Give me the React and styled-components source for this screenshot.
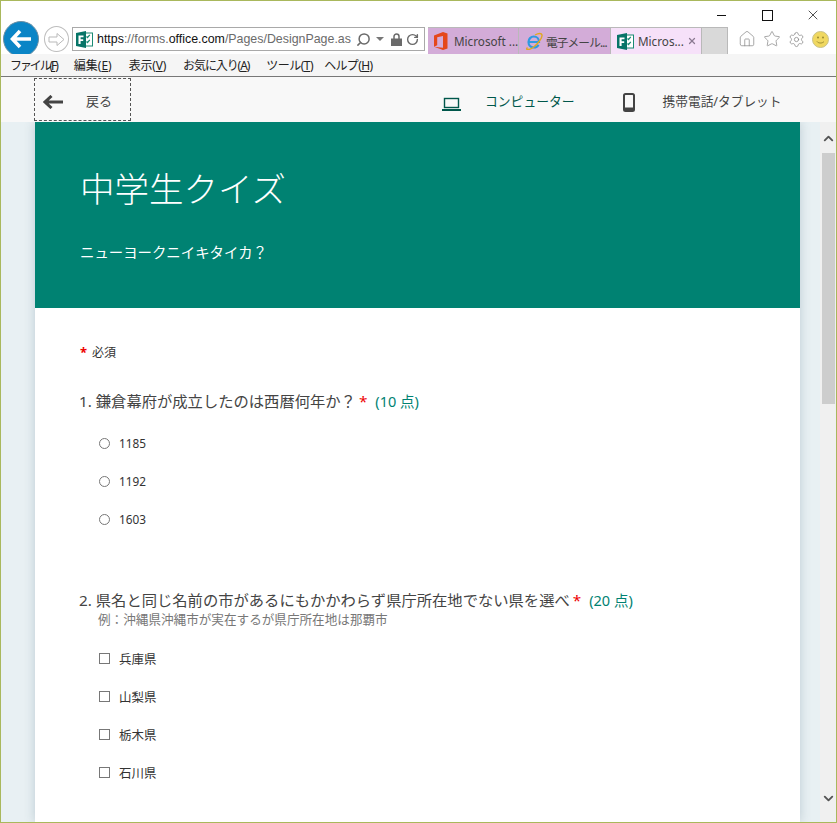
import React from "react";
import styled, { createGlobalStyle } from "styled-components";
import { Home, Star, Settings, Search, RotateCw, X, ChevronUp, ChevronDown } from "lucide-react";

const GlobalStyle = createGlobalStyle`
  html, body { margin: 0; padding: 0; background: #fff; }
  body { font-family: "Noto Sans", "Noto Sans CJK JP", sans-serif; }
  * { box-sizing: border-box; }
`;

const Window = styled.div`
  width: 837px;
  height: 823px;
  border: 1px solid #a9b85c;
  display: flex;
  flex-direction: column;
  overflow: hidden;
  background: #fff;
`;

// browser chrome
const Chrome = styled.div`
  height: 53px;
  overflow: hidden;
  flex-shrink: 0;
`;
const CaptionRow = styled.div`
  height: 26px;
  display: flex;
  justify-content: flex-end;
  align-items: flex-start;
  color: #111;
`;
const CaptionBtn = styled.div`
  width: 46px;
  height: 26px;
  display: flex;
  align-items: center;
  justify-content: center;
  padding-top: 2px;
`;
const MinLine = styled.span`
  width: 9px;
  height: 1px;
  background: #111;
`;
const MaxBox = styled.span`
  width: 11px;
  height: 11px;
  border: 1px solid #111;
`;
const NavRow = styled.div`
  height: 27px;
  display: flex;
  align-items: flex-start;
`;
const BackCircle = styled.div`
  width: 36px;
  height: 36px;
  border-radius: 50%;
  background: #0a85c6;
  border: 1px solid #6d8fa3;
  margin: -6px 0 0 2px;
  display: flex;
  align-items: center;
  justify-content: center;
  flex-shrink: 0;
`;
const ForwardCircle = styled.div`
  width: 25px;
  height: 26px;
  border-radius: 50%;
  border: 1px solid #bdbdbd;
  margin: -1px 0 0 5px;
  display: flex;
  align-items: center;
  justify-content: center;
  flex-shrink: 0;
`;
const AddressBar = styled.div`
  width: 353px;
  height: 24px;
  margin-left: 3px;
  border: 1px solid #a9a9a9;
  display: flex;
  align-items: center;
  padding: 0 5px 0 3px;
  flex-shrink: 0;
`;
const Url = styled.div`
  width: 256px;
  margin-left: 4px;
  overflow: hidden;
  white-space: nowrap;
  font-family: "Liberation Sans", sans-serif;
  font-size: 12.4px;
  color: #6b6b6b;
  b { font-weight: 400; color: #111; }
`;
const AddressTools = styled.div`
  display: flex;
  align-items: center;
  margin-left: 5px;
  color: #6a6a6a;
`;
const Caret = styled.span`
  width: 0;
  height: 0;
  border-left: 4px solid transparent;
  border-right: 4px solid transparent;
  border-top: 4px solid #777;
  margin: 0 7px 0 5px;
`;
const Tabs = styled.div`
  display: flex;
  margin-left: 3px;
  height: 27px;
  flex-shrink: 0;
`;
const Tab = styled.div`
  width: ${(p) => p.$w}px;
  height: 27px;
  background: ${(p) => (p.$active ? "#f6e1f9" : "#d3acd8")};
  border-top: 1px solid #b9b9b9;
  border-right: 1px solid #b9b9b9;
  display: flex;
  align-items: center;
  padding-left: 6px;
  gap: ${(p) => p.$gap}px;
  font-size: 11.7px;
  letter-spacing: ${(p) => p.$ls || 0}px;
  color: #444;
  white-space: nowrap;
`;
const TabClose = styled.span`
  display: flex;
  margin-left: -1px;
  color: #8b7a92;
`;
const BlankTab = styled.div`
  width: 26px;
  height: 27px;
  background: #d9d9d9;
  border-top: 1px solid #b9b9b9;
  border-right: 1px solid #b9b9b9;
`;
const Tools = styled.div`
  display: flex;
  align-items: center;
  gap: 7px;
  margin: 3px 0 0 10px;
  color: #8a8a8a;
`;

const MenuBar = styled.div`
  height: 23px;
  flex-shrink: 0;
  background: #f5f5f5;
  border-bottom: 1px solid #777;
  display: flex;
  align-items: center;
  padding-left: 9px;
  gap: 17px;
  font-size: 12px;
  color: #222;
`;
const MenuItem = styled.div`
  letter-spacing: ${(p) => p.$ls}px;
  margin-right: ${(p) => p.$mr || 0}px;
  white-space: nowrap;
  u { text-underline-offset: 1px; }
`;

// forms preview toolbar
const PreviewBar = styled.div`
  height: 45px;
  flex-shrink: 0;
  background: #f8f8f8;
  display: flex;
  align-items: flex-start;
`;
const BackLink = styled.div`
  width: 97px;
  height: 43px;
  margin: 1px 0 0 33px;
  border: 1px dashed #555;
  display: flex;
  align-items: center;
  padding-left: 8px;
  font-size: 13px;
  color: #444;
  svg { margin-top: 5px; }
  span { margin: 2px 0 0 23px; }
`;
const Device = styled.div`
  height: 45px;
  display: flex;
  align-items: center;
  margin-left: ${(p) => p.$ml}px;
  font-size: ${(p) => p.$size}px;
  color: ${(p) => p.$color};
  svg { margin-top: ${(p) => p.$iconTop}px; }
  span { margin: 2px 0 0 ${(p) => p.$gap}px; white-space: nowrap; }
`;

// page
const Main = styled.div`
  flex: 1;
  min-height: 0;
  display: flex;
`;
const Canvas = styled.div`
  flex: 1;
  min-width: 0;
  padding: 0 20px 0 34px;
  background: #e8f0f3;
  overflow: hidden;
`;
const Card = styled.div`
  background: #fff;
  height: 100%;
  box-shadow: 0 0 10px rgba(60, 90, 110, 0.25);
`;
const Banner = styled.div`
  height: 186px;
  background: #008272;
  color: #fff;
  padding: 44px 45px 0;
`;
const Title = styled.div`
  font-size: 34.500px;
  font-weight: 300;
  line-height: 45px;
`;
const Subtitle = styled.div`
  font-size: 14.400px;
  line-height: 20px;
  margin-top: 32px;
`;
const Body = styled.div`
  padding: 35px 45px 0;
`;
const Required = styled.div`
  font-size: 12px;
  line-height: 18px;
  color: #333;
  i { font-style: normal; font-weight: 700; color: #e00; margin-right: 5px; font-size: 13px; }
`;
const Question = styled.div`
  margin-top: ${(p) => p.$mt}px;
  margin-left: -1px;
  font-size: 15.300px;
  line-height: 20px;
  color: #444;
  white-space: nowrap;
`;
const Star2 = styled.span`
  color: #e00;
  margin: 0 ${(p) => p.$r}px 0 ${(p) => p.$l}px;
`;
const Points = styled.span`
  font-size: 14.500px;
  color: #008272;
`;
const Hint = styled.div`
  margin-left: 18px;
  font-size: 12.600px;
  line-height: 20px;
  color: #777;
  white-space: nowrap;
`;
const Options = styled.div`
  display: flex;
  flex-direction: column;
  gap: 20px;
  margin-top: ${(p) => p.$mt}px;
  padding-left: 19px;
`;
const Option = styled.div`
  height: 18px;
  display: flex;
  align-items: center;
  font-size: ${(p) => (p.$num ? 11.8 : 12.5)}px;
  color: #333;
  gap: 9px;
`;
const Mark = styled.span`
  width: 11px;
  height: 11px;
  border: 1px solid #777;
  border-radius: ${(p) => (p.$round ? "50%" : "0")};
  flex-shrink: 0;
`;

const Scrollbar = styled.div`
  width: 16px;
  flex-shrink: 0;
  background: #f0f0f0;
  display: flex;
  flex-direction: column;
  align-items: center;
  color: #555;
`;
const ScrollBtn = styled.div`
  height: 31px;
  display: flex;
  align-items: ${(p) => (p.$down ? "flex-start" : "flex-end")};
  padding: ${(p) => (p.$down ? "0" : "0 0 7px")};
`;
const Thumb = styled.div`
  width: 13px;
  height: 251px;
  background: #cdcdcd;
`;
const ScrollTrack = styled.div`
  flex: 1;
`;

// small pictures
const FormsLogo = ({ size = 17 }) => (
  <svg width={size} height={size} viewBox="0 0 17 17" style={{ flexShrink: 0 }}>
    <rect x="7" y="2" width="9.500" height="13" fill="#fff" stroke="#1a8a73" />
    <path d="M10.500 5.500l1 1 2.300-2.700M10.500 10.500l1 1 2.300-2.700" stroke="#1a8a73" strokeWidth="1.200" fill="none" />
    <path d="M0 2l10-2v17L0 15z" fill="#077568" />
    <path d="M2.500 4.500h5v1.800H4.600v2h2.600v1.700H4.600V13H2.500z" fill="#fff" />
  </svg>
);
const OfficeLogo = () => (
  <svg width="14" height="18" viewBox="0 0 14 18" style={{ flexShrink: 0 }}>
    <path d="M0 3.500L9 0l4.500 1.500v15L9 18l-9-3.200 9 1V4L3.200 5.300v8L0 14.800z" fill="#e5471a" />
  </svg>
);
const IeLogo = () => (
  <svg width="18" height="18" viewBox="0 0 18 18" style={{ flexShrink: 0 }}>
    <path d="M3.500 10h10.500c0-3.500-2.300-5.500-5.200-5.500S3.500 7 3.500 10s2.200 5.500 5.300 5.500c2.200 0 3.900-1.100 4.700-2.800" fill="none" stroke="#2f9ae0" strokeWidth="2.200" />
    <path d="M2.500 15.500c-2.500 2.500 1 3 5.500 0s9.500-9.500 9-12.500c-.4-2-3.500-2-7 0" fill="none" stroke="#e0a820" strokeWidth="1.400" />
  </svg>
);
const WhiteArrow = () => (
  <svg width="22" height="20" viewBox="0 0 22 20">
    <path d="M10 2L2.500 10l7.500 8M3 10h18" fill="none" stroke="#fff" strokeWidth="3.600" />
  </svg>
);
const GrayForward = () => (
  <svg width="17" height="15" viewBox="0 0 17 15">
    <path d="M1 5h8V1.500L16 7.500l-7 6V10H1z" fill="none" stroke="#b9b9b9" />
  </svg>
);
const LockIcon = () => (
  <svg width="11" height="13" viewBox="0 0 11 13" style={{ flexShrink: 0 }}>
    <path d="M3 6V3.500a2.500 2.500 0 0 1 5 0V6" fill="none" stroke="#6a6a6a" strokeWidth="1.500" />
    <rect x="0" y="5.500" width="11" height="7.500" fill="#6a6a6a" />
  </svg>
);
const BackArrow = () => (
  <svg width="20" height="14" viewBox="0 0 20 14" style={{ flexShrink: 0 }}>
    <path d="M8.500 1L2 7l6.500 6M2.500 7H20" fill="none" stroke="#444" strokeWidth="3" />
  </svg>
);
const LaptopIcon = () => (
  <svg width="19" height="14" viewBox="0 0 19 14" style={{ flexShrink: 0 }}>
    <rect x="2.500" y="1.500" width="14" height="9" fill="none" stroke="#00574b" strokeWidth="1.400" />
    <rect x="0" y="12" width="19" height="2" fill="#00574b" />
  </svg>
);
const PhoneIcon = () => (
  <svg width="12" height="19" viewBox="0 0 12 19" style={{ flexShrink: 0 }}>
    <rect x="1" y="1" width="10" height="17" rx="1.500" fill="none" stroke="#444" strokeWidth="2" />
    <rect x="1" y="14.500" width="10" height="3" fill="#444" />
  </svg>
);
const Smiley = () => (
  <svg width="17" height="17" viewBox="0 0 17 17" style={{ flexShrink: 0 }}>
    <circle cx="8.500" cy="8.500" r="8" fill="#f0d860" stroke="#c9c28a" />
    <circle cx="6" cy="6.500" r="1" fill="#9a8a30" />
    <circle cx="11" cy="6.500" r="1" fill="#9a8a30" />
    <path d="M5 10.500c1.500 2 5.500 2 7 0" fill="none" stroke="#9a8a30" />
  </svg>
);

const menus = [
  { label: "ファイル(", key: "F", ls: -2.1 },
  { label: "編集(", key: "E", ls: 0 },
  { label: "表示(", key: "V", ls: -0.2 },
  { label: "お気に入り(", key: "A", ls: -1.1 },
  { label: "ツール(", key: "T", ls: -0.5, mr: -6 },
  { label: "ヘルプ(", key: "H", ls: -0.65 },
];

const App = () => (
  <Window>
    <GlobalStyle />
    <Chrome>
      <CaptionRow>
        <CaptionBtn><MinLine /></CaptionBtn>
        <CaptionBtn><MaxBox /></CaptionBtn>
        <CaptionBtn><X size={16} strokeWidth={1.1} /></CaptionBtn>
      </CaptionRow>
      <NavRow>
        <BackCircle><WhiteArrow /></BackCircle>
        <ForwardCircle><GrayForward /></ForwardCircle>
        <AddressBar>
          <FormsLogo />
          <Url><b>https</b>://forms.<b>office.com</b>/Pages/DesignPage.aspx</Url>
          <AddressTools>
            <Search size={15} strokeWidth={2.4} style={{ transform: "scaleX(-1)" }} />
            <Caret />
            <LockIcon />
            <RotateCw size={13} strokeWidth={2.6} style={{ marginLeft: 4 }} />
          </AddressTools>
        </AddressBar>
        <Tabs>
          <Tab $w={91} $gap={6}><OfficeLogo />Microsoft ...</Tab>
          <Tab $w={92} $gap={3} $ls={-0.9}><IeLogo />電子メール...</Tab>
          <Tab $w={91} $gap={4} $active><FormsLogo />Micros...<TabClose><X size={10} strokeWidth={3} /></TabClose></Tab>
          <BlankTab />
        </Tabs>
        <Tools>
          <Home size={18} strokeWidth={1} />
          <Star size={18} strokeWidth={1} />
          <Settings size={17} strokeWidth={1.1} />
          <Smiley />
        </Tools>
      </NavRow>
    </Chrome>
    <MenuBar>
      {menus.map((m) => (
        <MenuItem key={m.key} $ls={m.ls} $mr={m.mr}>{m.label}<u>{m.key}</u>)</MenuItem>
      ))}
    </MenuBar>
    <PreviewBar>
      <BackLink><BackArrow /><span>戻る</span></BackLink>
      <Device $ml={311} $gap={24} $size={12.8} $iconTop={8} $color="#00574b"><LaptopIcon /><span>コンピューター</span></Device>
      <Device $ml={48} $gap={28} $size={12.7} $iconTop={6} $color="#444"><PhoneIcon /><span>携帯電話/タブレット</span></Device>
    </PreviewBar>
    <Main>
      <Canvas>
        <Card>
          <Banner>
            <Title>中学生クイズ</Title>
            <Subtitle>ニューヨークニイキタイカ？</Subtitle>
          </Banner>
          <Body>
            <Required><i>*</i>必須</Required>
            <Question $mt={29}>1. 鎌倉幕府が成立したのは西暦何年か？<Star2 $l={3} $r={8}>*</Star2><Points>(10 点)</Points></Question>
            <Options $mt={23}>
              <Option $num><Mark $round />1185</Option>
              <Option $num><Mark $round />1192</Option>
              <Option $num><Mark $round />1603</Option>
            </Options>
            <Question $mt={62}>2. 県名と同じ名前の市があるにもかかわらず県庁所在地でない県を選べ<Star2 $l={3} $r={8}>*</Star2><Points>(20 点)</Points></Question>
            <Hint>例：沖縄県沖縄市が実在するが県庁所在地は那覇市</Hint>
            <Options $mt={19}>
              <Option><Mark />兵庫県</Option>
              <Option><Mark />山梨県</Option>
              <Option><Mark />栃木県</Option>
              <Option><Mark />石川県</Option>
            </Options>
          </Body>
        </Card>
      </Canvas>
      <Scrollbar>
        <ScrollBtn><ChevronUp size={15} strokeWidth={3} /></ScrollBtn>
        <Thumb />
        <ScrollTrack />
        <ScrollBtn $down><ChevronDown size={15} strokeWidth={3} /></ScrollBtn>
      </Scrollbar>
    </Main>
  </Window>
);

export default App;
